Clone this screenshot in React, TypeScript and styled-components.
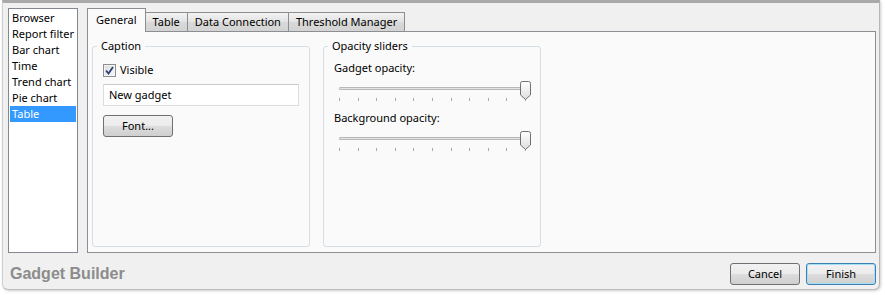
import React from "react";
import styled, { createGlobalStyle, css } from "styled-components";

const Global = createGlobalStyle`
  html, body { margin: 0; padding: 0; background: #ffffff; }
  body {
    font-family: "Noto Sans", "Open Sans", sans-serif;
    font-size: 11px;
    color: #000000;
  }
  * { box-sizing: border-box; }
`;

const Page = styled.div`
  width: 885px;
  height: 295px;
  padding: 0 5px 5px 2px;
`;

const Window = styled.div`
  width: 878px;
  height: 290px;
  background: #f0f0f0;
  border-top: 3px solid #a9a9a9;
  border-left: 1px solid #cfcfcf;
  border-right: 1px solid #b5b5b5;
  border-bottom: 1px solid #bdbdbd;
  border-radius: 0 0 6px 6px;
  box-shadow: 1px 1px 3px rgba(0, 0, 0, 0.2);
  display: flex;
  flex-direction: column;
  padding: 5px 3px 0 5px;
`;

const Body = styled.div`
  display: flex;
  gap: 9px;
  height: 245px;
`;

const List = styled.div`
  width: 70px;
  height: 100%;
  background: #ffffff;
  border: 1px solid #828790;
  padding: 1px;
`;

const ListItem = styled.div<{ $selected?: boolean }>`
  height: 16px;
  line-height: 16px;
  padding-left: 2px;
  white-space: nowrap;
  overflow: hidden;
  ${(p) =>
    p.$selected &&
    css`
      background: #3399ff;
      color: #ffffff;
    `}
`;

const Tabs = styled.div`
  flex: 1;
  display: flex;
  flex-direction: column;
`;

const TabStrip = styled.div`
  display: flex;
  align-items: flex-end;
  height: 23px;
  position: relative;
  z-index: 1;
`;

const Tab = styled.div<{ $active?: boolean }>`
  height: 19px;
  line-height: 18px;
  padding: 0 7px;
  margin-left: -1px;
  border: 1px solid #8c8e94;
  border-bottom: none;
  background: linear-gradient(#f2f2f2, #e3e3e3 50%, #d9d9d9 51%, #d3d3d3);
  white-space: nowrap;
  &:first-child {
    margin-left: 0;
  }
  ${(p) =>
    p.$active &&
    css`
      height: 24px;
      margin-bottom: -1px;
      padding: 1px 8px 0;
      line-height: 20px;
      background: #fafafa;
      position: relative;
      z-index: 2;
    `}
`;

const Panel = styled.div`
  flex: 1;
  border: 1px solid #8c8e94;
  background: #fafafa;
  display: flex;
  gap: 13px;
  padding: 6px 4px 5px 4px;
`;

const Group = styled.fieldset`
  width: 218px;
  margin: 0;
  padding: 0;
  border: 1px solid #d5dfe5;
  border-radius: 3px;
  min-width: 0;
`;

const Legend = styled.legend`
  margin-left: 4px;
  padding: 0 4px;
  line-height: 16px;
  font-size: 11px;
`;

const GroupContent = styled.div`
  display: flex;
  flex-direction: column;
  align-items: flex-start;
  padding: 0 9px 0 10px;
`;

const CheckRow = styled.label`
  display: flex;
  align-items: center;
  gap: 4px;
  height: 14px;
  margin-top: 9px;
  line-height: 14px;
`;

const CheckBox = styled.span`
  width: 13px;
  height: 13px;
  border: 1px solid #8e8f8f;
  background: linear-gradient(135deg, #dcdcdc, #f8f8f8);
  display: flex;
  align-items: center;
  justify-content: center;
  box-shadow: inset 0 0 0 1px #f4f4f4;
`;

const TextInput = styled.div`
  margin-top: 7px;
  width: 196px;
  height: 22px;
  line-height: 20px;
  padding-left: 5px;
  background: #ffffff;
  border: 1px solid #dadde2;
  border-top-color: #c6c9ce;
`;

const Button = styled.div<{ $default?: boolean }>`
  width: 70px;
  height: 22px;
  line-height: 20px;
  text-align: center;
  border: 1px solid #707070;
  border-radius: 3px;
  background: linear-gradient(#f2f2f2, #ebebeb 50%, #dddddd 51%, #cfcfcf);
  ${(p) =>
    p.$default &&
    css`
      border-color: #3c7fb1;
      box-shadow: inset 0 0 0 1px #a6dff5;
    `}
`;

const FontButton = styled(Button)`
  margin-top: 9px;
`;

const SliderLabel = styled.div<{ $first?: boolean }>`
  line-height: 16px;
  margin-top: ${(p) => (p.$first ? "6px" : "8px")};
`;

const Slider = styled.div`
  position: relative;
  margin-top: 4px;
  margin-left: 3px;
  width: 194px;
  height: 22px;
  padding-top: 7px;
`;

const Track = styled.div`
  margin-left: 2px;
  width: 188px;
  height: 3px;
  background: #e4e4e4;
  border: 1px solid #b8b8b8;
  border-radius: 1px;
`;

const Ticks = styled.div`
  display: flex;
  justify-content: space-between;
  margin-top: 8px;
  margin-left: 2px;
  width: 187px;
  height: 3px;
`;

const Tick = styled.span`
  width: 1px;
  height: 3px;
  background: #a8a8a8;
`;

const Thumb = styled.svg`
  position: absolute;
  left: 183px;
  top: 1px;
`;

const Footer = styled.div`
  display: flex;
  align-items: center;
  gap: 6px;
  padding-top: 10px;
`;

const Brand = styled.div`
  flex: 1;
  margin-left: 2px;
  font-family: "Liberation Sans", Arial, sans-serif;
  font-weight: bold;
  font-size: 16px;
  color: #8c8c8c;
`;

const SliderControl = () => (
  <Slider>
    <Track />
    <Ticks>
      {Array.from({ length: 11 }).map((_, i) => (
        <Tick key={i} />
      ))}
    </Ticks>
    <Thumb width="11" height="19" viewBox="0 0 11 19">
      <defs>
        <linearGradient id="thumbfill" x1="0" y1="0" x2="0" y2="1">
          <stop offset="0" stopColor="#ffffff" />
          <stop offset="1" stopColor="#dedede" />
        </linearGradient>
      </defs>
      <path
        d="M0.5 2.5 Q0.5 0.5 2.5 0.5 H8.5 Q10.5 0.5 10.5 2.5 V14 L5.5 18.5 L0.5 14 Z"
        fill="url(#thumbfill)"
        stroke="#707070"
      />
    </Thumb>
  </Slider>
);

const items = ["Browser", "Report filter", "Bar chart", "Time", "Trend chart", "Pie chart", "Table"];

export default function App() {
  return (
    <>
      <Global />
      <Page>
        <Window>
          <Body>
            <List>
              {items.map((it) => (
                <ListItem key={it} $selected={it === "Table"}>
                  {it}
                </ListItem>
              ))}
            </List>
            <Tabs>
              <TabStrip>
                <Tab $active>General</Tab>
                <Tab>Table</Tab>
                <Tab>Data Connection</Tab>
                <Tab>Threshold Manager</Tab>
              </TabStrip>
              <Panel>
                <Group>
                  <Legend>Caption</Legend>
                  <GroupContent>
                    <CheckRow>
                      <CheckBox>
                        <svg width="9" height="9" viewBox="0 0 9 9">
                          <path d="M1 4.5 L3.5 7.5 L8 1" fill="none" stroke="#2b3f7a" strokeWidth="1.8" />
                        </svg>
                      </CheckBox>
                      Visible
                    </CheckRow>
                    <TextInput>New gadget</TextInput>
                    <FontButton>Font...</FontButton>
                  </GroupContent>
                </Group>
                <Group>
                  <Legend>Opacity sliders</Legend>
                  <GroupContent>
                    <SliderLabel $first>Gadget opacity:</SliderLabel>
                    <SliderControl />
                    <SliderLabel>Background opacity:</SliderLabel>
                    <SliderControl />
                  </GroupContent>
                </Group>
              </Panel>
            </Tabs>
          </Body>
          <Footer>
            <Brand>Gadget Builder</Brand>
            <Button>Cancel</Button>
            <Button $default>Finish</Button>
          </Footer>
        </Window>
      </Page>
    </>
  );
}
